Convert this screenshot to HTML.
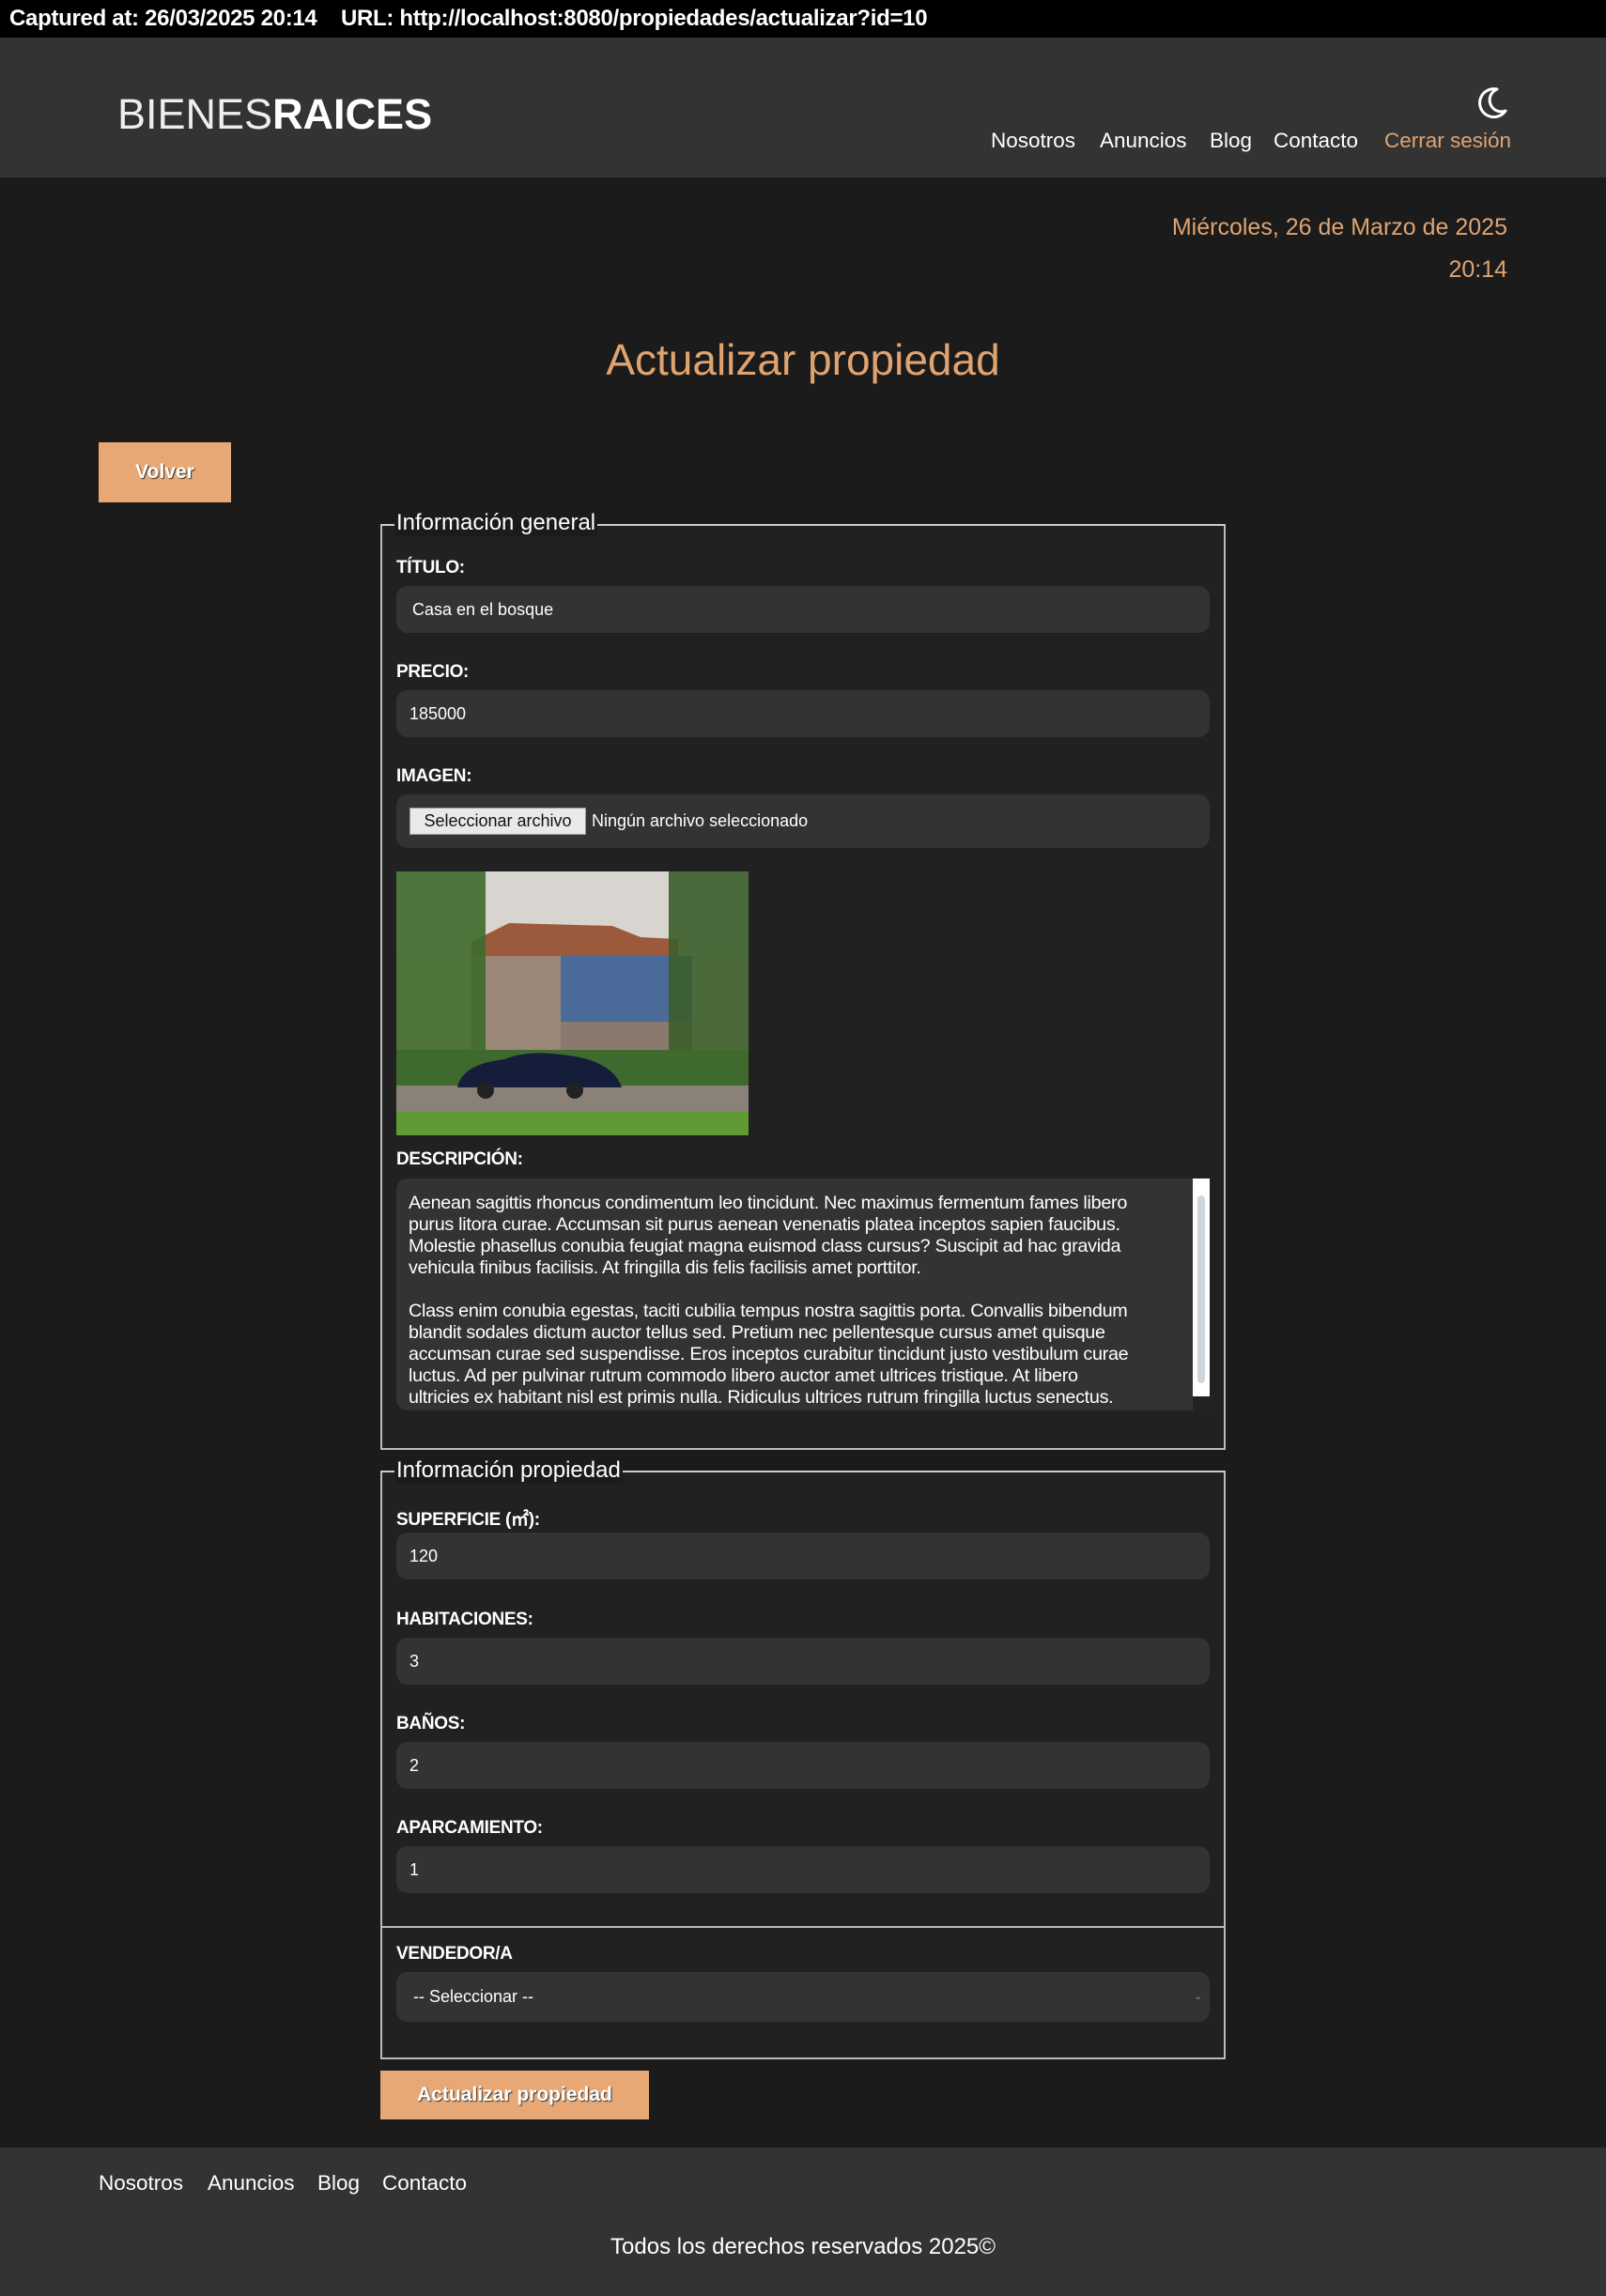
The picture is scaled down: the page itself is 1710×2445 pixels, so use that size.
<!DOCTYPE html>
<html><head><meta charset="utf-8"><style>
*{box-sizing:border-box;margin:0;padding:0}
body{width:1710px;height:2445px;background:#1b1b1b;font-family:"Liberation Sans",sans-serif;color:#fff;position:relative;overflow:hidden}
.a{position:absolute;white-space:nowrap}
.top{left:0;top:0;width:1710px;height:40px;background:#000;font-weight:bold;font-size:24px;line-height:40px;padding-left:10px;letter-spacing:-0.3px}
.hdr{left:0;top:40px;width:1710px;height:149px;background:#333}
.nav{font-size:22.5px;line-height:28px;top:136px}
.fs{border:2px solid #bbb;border-top-color:#ccc;background:#212121}
.lg{font-size:24px;background:#1b1b1b;padding:0 2px}
.lb{font-size:19px;font-weight:bold;letter-spacing:-0.3px}
.in{background:#333;border-radius:12px;left:422px;width:866px;height:50px;font-size:18px;line-height:50px;padding-left:14px}
.btn{background:#e8a875;color:#fff;font-weight:bold;font-size:21px;text-align:center;text-shadow:1px 1px 1px #333}
</style></head><body>
<div class="a top">Captured at: 26/03/2025 20:14 &nbsp;&nbsp; URL: http://localhost:8080/propiedades/actualizar?id=10</div>
<div class="a hdr"></div>
<div class="a" style="left:125px;top:96px;font-size:45px;line-height:52px;letter-spacing:0"><span style="font-weight:300;color:#eee">BIENES</span><b>RAICES</b></div>
<svg class="a" style="left:1570px;top:89px" width="40" height="40" viewBox="0 0 40 40"><path d="M24 6 A15 15 0 1 0 33 29 A12 12 0 0 1 24 6 Z" fill="none" stroke="#fff" stroke-width="3" stroke-linejoin="round"/></svg>
<div class="a nav" style="left:1055px">Nosotros</div>
<div class="a nav" style="left:1171px">Anuncios</div>
<div class="a nav" style="left:1288px">Blog</div>
<div class="a nav" style="left:1356px">Contacto</div>
<div class="a nav" style="left:1474px;color:#e0a370">Cerrar sesión</div>
<div class="a" style="right:105px;top:228px;font-size:25px;color:#e0a370">Miércoles, 26 de Marzo de 2025</div>
<div class="a" style="right:105px;top:273px;font-size:25px;color:#e0a370">20:14</div>
<div class="a" style="left:0;width:1710px;text-align:center;top:356px;font-size:46px;font-weight:300;color:#e0a370">Actualizar propiedad</div>
<div class="a btn" style="left:105px;top:471px;width:141px;height:64px;line-height:64px">Volver</div>

<div class="a fs" style="left:405px;top:558px;width:900px;height:986px"></div>
<div class="a lg" style="left:420px;top:543px">Información general</div>
<div class="a lb" style="left:422px;top:594px">TÍTULO:</div>
<div class="a in" style="top:624px;padding-left:17px">Casa en el bosque</div>
<div class="a lb" style="left:422px;top:705px">PRECIO:</div>
<div class="a in" style="top:735px">185000</div>
<div class="a lb" style="left:422px;top:816px">IMAGEN:</div>
<div class="a in" style="top:846px;height:57px;line-height:57px"></div>
<div class="a" style="left:436px;top:860px;width:188px;height:29px;background:#e9e9e9;border:1px solid #999;color:#111;font-size:18px;line-height:27px;text-align:center">Seleccionar archivo</div>
<div class="a" style="left:630px;top:860px;font-size:18px;line-height:29px">Ningún archivo seleccionado</div>
<svg class="a" style="left:422px;top:928px" width="375" height="281" viewBox="0 0 375 281">
<rect width="375" height="281" fill="#cfcac4"/>
<rect x="0" y="0" width="375" height="90" fill="#d8d4cf"/>
<polygon points="80,75 120,55 230,58 260,70 300,72 300,90 80,92" fill="#9b5a3c"/>
<rect x="80" y="90" width="160" height="130" fill="#9a8778"/>
<rect x="175" y="90" width="140" height="70" fill="#4a6a9a"/>
<rect x="175" y="160" width="140" height="60" fill="#8a7a6e"/>
<rect x="0" y="0" width="95" height="230" fill="#3f6a2a" opacity=".9"/>
<rect x="290" y="0" width="85" height="200" fill="#3c5e2a" opacity=".9"/>
<rect x="0" y="190" width="375" height="40" fill="#3f6a2e"/>
<rect x="0" y="228" width="375" height="28" fill="#8a8278"/>
<rect x="0" y="256" width="375" height="25" fill="#5f9a35"/>
<path d="M65 230 Q70 205 115 200 Q140 190 175 195 Q230 200 240 230 Z" fill="#141d3a"/>
<circle cx="95" cy="233" r="9" fill="#222"/><circle cx="190" cy="233" r="9" fill="#222"/>
</svg>
<div class="a lb" style="left:422px;top:1224px">DESCRIPCIÓN:</div>
<div class="a" style="left:422px;top:1255px;width:866px;height:247px;background:#333;border-radius:12px 0 0 12px;overflow:hidden">
<div style="position:absolute;left:13px;top:15px;font-size:19.8px;line-height:23px;white-space:pre;letter-spacing:-0.3px">Aenean sagittis rhoncus condimentum leo tincidunt. Nec maximus fermentum fames libero
purus litora curae. Accumsan sit purus aenean venenatis platea inceptos sapien faucibus.
Molestie phasellus conubia feugiat magna euismod class cursus? Suscipit ad hac gravida
vehicula finibus facilisis. At fringilla dis felis facilisis amet porttitor.

Class enim conubia egestas, taciti cubilia tempus nostra sagittis porta. Convallis bibendum
blandit sodales dictum auctor tellus sed. Pretium nec pellentesque cursus amet quisque
accumsan curae sed suspendisse. Eros inceptos curabitur tincidunt justo vestibulum curae
luctus. Ad per pulvinar rutrum commodo libero auctor amet ultrices tristique. At libero
ultricies ex habitant nisl est primis nulla. Ridiculus ultrices rutrum fringilla luctus senectus.</div>
<div style="position:absolute;right:0;top:0;width:18px;height:247px;background:#fff"><div style="position:absolute;left:5px;top:18px;width:8px;height:200px;background:#cdd5dd;border-radius:4px"></div><div style="position:absolute;left:0;bottom:0;width:18px;height:15px;background:#222"></div></div>
</div>

<div class="a fs" style="left:405px;top:1566px;width:900px;height:489px;border-bottom:4px solid #bbb"></div>
<div class="a lg" style="left:420px;top:1552px">Información propiedad</div>
<div class="a lb" style="left:422px;top:1603px">SUPERFICIE (㎡):</div>
<div class="a in" style="top:1632px">120</div>
<div class="a lb" style="left:422px;top:1714px">HABITACIONES:</div>
<div class="a in" style="top:1744px">3</div>
<div class="a lb" style="left:422px;top:1825px">BAÑOS:</div>
<div class="a in" style="top:1855px">2</div>
<div class="a lb" style="left:422px;top:1936px">APARCAMIENTO:</div>
<div class="a in" style="top:1966px">1</div>

<div class="a fs" style="left:405px;top:2053px;width:900px;height:140px;border-top:none"></div>
<div class="a lb" style="left:422px;top:2070px">VENDEDOR/A</div>
<div class="a in" style="top:2100px;height:53px;line-height:53px;padding-left:18px;font-size:18px">-- Seleccionar --<span style="position:absolute;right:8px;font-size:10px;color:#999">⌄</span></div>

<div class="a btn" style="left:405px;top:2205px;width:286px;height:52px;line-height:52px">Actualizar propiedad</div>

<div class="a" style="left:0;top:2287px;width:1710px;height:158px;background:#333"></div>
<div class="a nav" style="left:105px;top:2311px">Nosotros</div>
<div class="a nav" style="left:221px;top:2311px">Anuncios</div>
<div class="a nav" style="left:338px;top:2311px">Blog</div>
<div class="a nav" style="left:407px;top:2311px">Contacto</div>
<div class="a" style="left:0;width:1710px;text-align:center;top:2379px;font-size:24px">Todos los derechos reservados 2025©</div>
</body></html>
